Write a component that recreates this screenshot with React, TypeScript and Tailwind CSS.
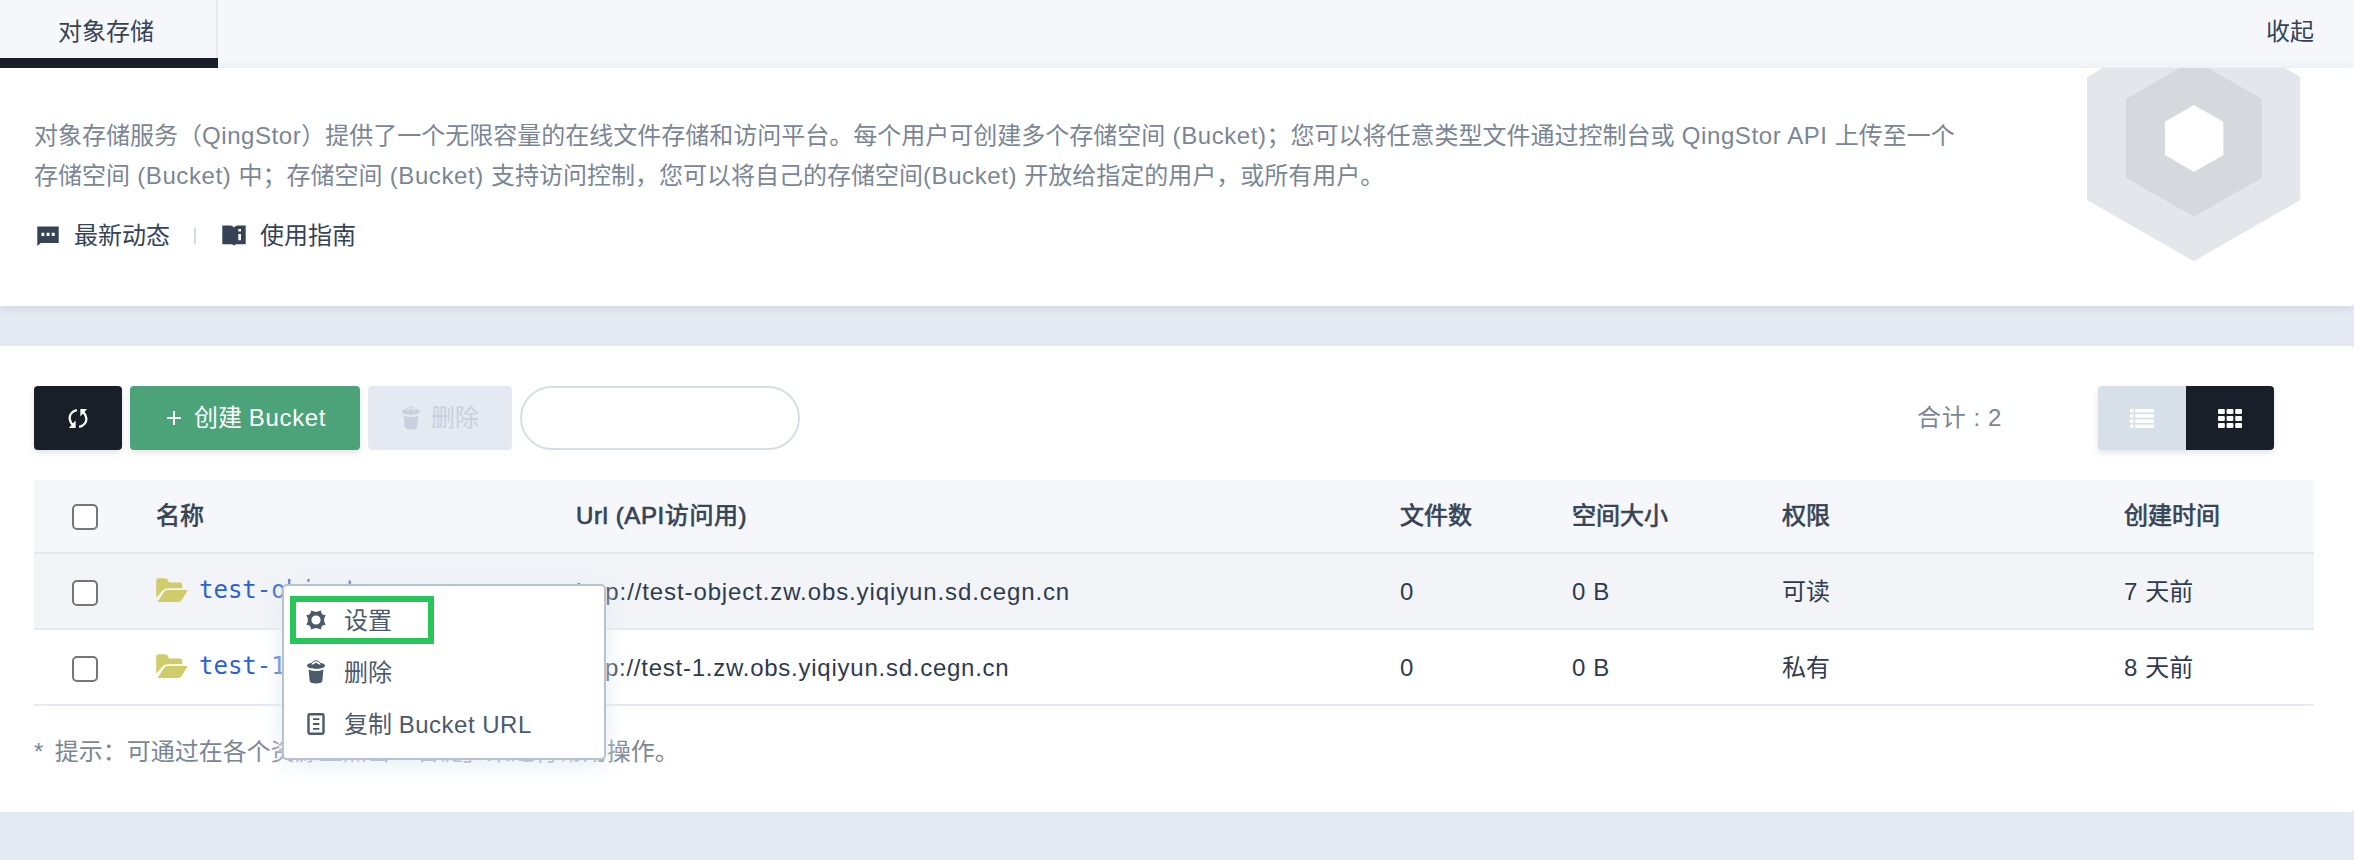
import type { ReactNode } from "react";

const SANS = "font-['Liberation_Sans','Noto_Sans_CJK_SC',sans-serif]";

function ChatIcon() {
  return (
    <svg className="h-5 w-[22px]" viewBox="0 0 22 20" fill="currentColor">
      <path fillRule="evenodd" d="M0.3 0.4H21.7V17H3.8L0.3 20ZM4.4 6.8V10H7.3V6.8ZM9.6 6.8V10H12.5V6.8ZM14.8 6.8V10H17.7V6.8Z" />
    </svg>
  );
}

function GuideIcon() {
  return (
    <svg className="h-[21px] w-6" viewBox="0 0 24 21" fill="currentColor">
      <path d="M0.3 0.5H8.3Q10.6 0.7 12 2.6Q13.4 0.7 15.7 0.5H23.7V19.2H14Q13 19.4 12 20.8Q11 19.4 10 19.2H0.3Z" />
      <path d="M16.3 4.1H19V6.5H16.3ZM16.3 8.9H19V15.2H16.3Z" fill="#fff" />
    </svg>
  );
}

function RefreshIcon() {
  return (
    <svg className="h-[19px] w-5" viewBox="0 0 20 19" fill="none" stroke="currentColor" strokeWidth="2.3">
      <path d="M8.9 1.1C3.9 2.1 1.2 5.9 1.7 9.9C2 12.1 3.2 14.6 5.2 16.4" />
      <path d="M7.6 11.4V19H0.9Z" fill="currentColor" stroke="none" />
      <path d="M11.1 17.9C16.1 16.9 18.8 13.1 18.3 9.1C18 6.9 16.8 4.4 14.8 2.6" />
      <path d="M12.4 7.6V0H19.1Z" fill="currentColor" stroke="none" />
    </svg>
  );
}

function TrashIcon() {
  return (
    <svg className="h-6 w-[18px]" viewBox="0 0 18 24" fill="currentColor">
      <path d="M4.3 4C5.2 1.9 7 .9 9 .9S12.8 1.9 13.7 4" fill="none" stroke="currentColor" strokeWidth="1" />
      <path d="M0 5.6C0 4.2 2 3.2 4.3 2.9L4.7 4.7L6.3 4.2L9 2.7L11.7 4.2L13.3 4.7L13.7 2.9C16 3.2 18 4.2 18 5.6C18 7.6 14 9 9 9S0 7.6 0 5.6Z" />
      <path d="M1.6 9.5Q5 11 9 11T16.4 9.5L15.3 21Q15.1 22.2 13.8 22.7Q9 24.2 4.2 22.7Q2.9 22.2 2.7 21Z" />
    </svg>
  );
}

function GearIcon() {
  return (
    <svg className="size-5" viewBox="0 0 20 20" fill="currentColor">
      <path
        fillRule="evenodd"
        d="M5.2.4L8.1 1.6Q10 2.3 11.9 1.6L14.8.4L15.6 3.3Q16 4 16.7 4.4L19.6 5.2L18.4 8.1Q17.7 10 18.4 11.9L19.6 14.8L16.7 15.6Q16 16 15.6 16.7L14.8 19.6L11.9 18.4Q10 17.7 8.1 18.4L5.2 19.6L4.4 16.7Q4 16 3.3 15.6L.4 14.8L1.6 11.9Q2.3 10 1.6 8.1L.4 5.2L3.3 4.4Q4 4 4.4 3.3ZM10 5.4A4.6 4.6 0 1 0 10 14.6A4.6 4.6 0 1 0 10 5.4Z"
      />
    </svg>
  );
}

function DocIcon() {
  return (
    <svg className="h-[22px] w-[18px]" viewBox="0 0 18 22" fill="none" stroke="currentColor">
      <rect x="1.5" y="1.2" width="15" height="19.6" rx="1.2" strokeWidth="2.4" />
      <path d="M6 6.2H12.4M6 11H12.4M6 15.8H12.4" strokeWidth="1.8" />
    </svg>
  );
}

function FolderIcon() {
  return (
    <svg className="h-6 w-8" viewBox="0 0 32 24" fill="#d1cc6b">
      <path d="M0.2 19.8V2.4Q0.2 0.2 2.4 0.2H9.4Q11 0.2 11.8 1.7L13 4.4H24Q26.3 4.4 26.3 6.6V10.2H12.4Q8 10.2 5.9 13.2Z" />
      <path d="M1.5 24L7.9 14.1Q9.1 12.1 11.5 12.1H30.9Q31.9 12.1 31.3 13.1L25.5 22.2Q24.3 24 22.1 24Z" />
    </svg>
  );
}

function ListIcon() {
  return (
    <svg className="h-[19px] w-6" viewBox="0 0 24 19" fill="currentColor">
      {[0, 5.2, 10.4, 15.6].map((y) => (
        <g key={y}>
          <rect x="0" y={y} width="3.4" height="3.4" />
          <rect x="5.2" y={y} width="18.8" height="3.4" />
        </g>
      ))}
    </svg>
  );
}

function GridIcon() {
  return (
    <svg className="h-[19px] w-6" viewBox="0 0 24 19" fill="currentColor">
      {[0, 7, 14].map((y) =>
        [0, 8.6, 17.2].map((x) => <rect key={`${x}-${y}`} x={x} y={y} width="6.8" height="5" rx="1" />)
      )}
    </svg>
  );
}

function HexMark() {
  return (
    <svg className="h-[193px] w-[214px]" viewBox="2087 68 214 193">
      <path d="M2193.7 15.5L2300.3 77V200L2193.7 261.2L2087 200V77Z" fill="#e3e6eb" />
      <path d="M2194 59.8L2262 99V177.7L2194 216.8L2126 177.7V99Z" fill="#d5d8dd" />
      <path d="M2194 105L2223.4 121.8V155L2194 172L2165 155V121.8Z" fill="#fff" />
    </svg>
  );
}

function Latin({ children }: { children: ReactNode }) {
  return <span className="tracking-[0.58px]">{children}</span>;
}

function Checkbox() {
  return (
    <span className="flex w-[122px] shrink-0 pl-[38px] pt-[2px]">
      <span className="size-[26px] rounded-[5px] border-2 border-[#767676] bg-white" />
    </span>
  );
}

interface Bucket {
  name: string;
  url: string;
  urlTracking: string;
  access: string;
  created: string;
}

const buckets: Bucket[] = [
  {
    name: "test-object",
    url: "http://test-object.zw.obs.yiqiyun.sd.cegn.cn",
    urlTracking: "tracking-[0.89px]",
    access: "可读",
    created: "7 天前",
  },
  {
    name: "test-1",
    url: "http://test-1.zw.obs.yiqiyun.sd.cegn.cn",
    urlTracking: "tracking-[0.75px]",
    access: "私有",
    created: "8 天前",
  },
];

function Columns({ cells }: { cells: ReactNode[] }) {
  return (
    <>
      <Checkbox />
      <div className="w-[420px] shrink-0">{cells[0]}</div>
      <div className="w-[824px] shrink-0">{cells[1]}</div>
      <div className="w-[172px] shrink-0">{cells[2]}</div>
      <div className="w-[210px] shrink-0">{cells[3]}</div>
      <div className="w-[342px] shrink-0">{cells[4]}</div>
      <div>{cells[5]}</div>
    </>
  );
}

function MenuItem({ icon, children }: { icon: ReactNode; children: ReactNode }) {
  return (
    <div className="flex h-[52px] items-center">
      <span className="flex w-[60px] justify-center pl-[3px]">{icon}</span>
      <span className="pt-px">{children}</span>
    </div>
  );
}

function ContextMenu() {
  return (
    <div className="absolute left-[282px] top-[584px] flex h-[176px] w-[324px] flex-col rounded-[5px] border-2 border-[#b6c2cf] bg-white py-2 text-[#4c5a6c] shadow-[0_4px_26px_#e6edf2]">
      <MenuItem icon={<GearIcon />}>设置</MenuItem>
      <MenuItem icon={<TrashIcon />}>删除</MenuItem>
      <MenuItem icon={<DocIcon />}>
        复制 <span className="tracking-[0.5px]">Bucket URL</span>
      </MenuItem>
      <div className="absolute left-[6px] top-[10px] h-12 w-36 border-[6px] border-[#28c558]" />
    </div>
  );
}

export default function App() {
  return (
    <div className={`relative flex h-[860px] w-[2354px] flex-col overflow-hidden whitespace-nowrap bg-[#e5e9f2] text-[24px] leading-[40px] text-[#364355] ${SANS}`}>
      <header className="flex h-[68px] shrink-0 justify-between bg-[#f5f7fa]">
        <div className="flex w-[218px] flex-col">
          <div className="flex h-[58px] items-center border-r-2 border-[#e5e9f0] pl-[58px] pt-[6px]">对象存储</div>
          <div className="h-[10px] bg-[#181f29]" />
        </div>
        <div className="flex h-[58px] items-center pr-10 pt-[6px]">收起</div>
      </header>

      <section className="flex h-[238px] shrink-0 justify-between rounded-br-[4px] bg-white pl-[34px] pr-[53px] shadow-[0_2px_8px_rgba(60,80,100,0.13)]">
        <div className="flex flex-col pt-12">
          <p className="text-[#7b8694]">
            对象存储服务（<Latin>QingStor</Latin>）提供了一个无限容量的在线文件存储和访问平台。每个用户可创建多个存储空间<Latin> (Bucket)</Latin>；您可以将任意类型文件通过控制台或<Latin> QingStor API </Latin>上传至一个
            <br />
            存储空间<Latin> (Bucket) </Latin>中；存储空间<Latin> (Bucket) </Latin>支持访问控制，您可以将自己的存储空间<Latin>(Bucket) </Latin>开放给指定的用户，或所有用户。
          </p>
          <div className="mt-[19px] flex items-center pl-[3px]">
            <ChatIcon />
            <span className="ml-[15px] pt-px">最新动态</span>
            <span className="ml-6 h-4 w-[2px] bg-[#d3dce8]" />
            <span className="ml-[26px]"><GuideIcon /></span>
            <span className="ml-[14px] pt-px">使用指南</span>
          </div>
        </div>
        <HexMark />
      </section>

      <main className="mt-10 flex h-[466px] shrink-0 flex-col rounded-r-[4px] bg-white px-[34px] pr-10 pt-10">
        <div className="flex h-16 items-center">
          <button className="flex h-16 w-[88px] items-center justify-center rounded-[4px] bg-[#181f29] text-white shadow-[0_3px_6px_rgba(35,45,65,0.12)]">
            <RefreshIcon />
          </button>
          <button className="ml-2 flex h-16 w-[230px] items-center rounded-[4px] bg-[#4ca379] pl-[37px] text-white shadow-[0_3px_6px_rgba(35,45,65,0.12)]">
            <svg className="mr-[13px] size-[14px]" viewBox="0 0 14 14" stroke="currentColor" strokeWidth="2"><path d="M0 7H14M7 0V14" /></svg>
            创建&nbsp;<span className="tracking-[0.7px]">Bucket</span>
          </button>
          <button className="ml-2 flex h-16 w-36 items-center gap-[11px] rounded-[4px] bg-[#e5e9f2] pl-[34px] text-[#c8d0dd]">
            <TrashIcon />
            删除
          </button>
          <div className="ml-2 h-16 w-[280px] rounded-full border-2 border-[#d8dee7]" />
          <div className="ml-auto mr-24 tracking-[0.6px] text-[#7b8694]">合计 : 2</div>
          <div className="mr-10 flex h-16 w-[176px] overflow-hidden rounded-[4px] text-white shadow-[0_3px_6px_rgba(35,45,65,0.12)]">
            <div className="flex w-[88px] items-center justify-center bg-[#d7dfe8]"><ListIcon /></div>
            <div className="flex w-[88px] items-center justify-center bg-[#181f29]"><GridIcon /></div>
          </div>
        </div>

        <div className="mt-[30px] flex flex-col">
          <div className="flex h-[74px] items-center border-b-2 border-[#e3e9ef] bg-[#f5f7fa] [-webkit-text-stroke:0.7px_#364355]">
            <Columns
              cells={["名称", <span key="u" className="tracking-[0.6px]">Url (API访问用)</span>, "文件数", "空间大小", "权限", "创建时间"]}
            />
          </div>
          {buckets.map((b, i) => (
            <div
              key={b.name}
              className={`flex h-[76px] items-center border-b-2 border-[#e5e9f0] pt-[2px] text-[#2f3b4c] ${i === 0 ? "bg-[#f2f4f8]" : ""}`}
            >
              <Columns
                cells={[
                  <span key="n" className="flex items-center gap-[11px] pb-[5px]">
                    <FolderIcon />
                    <span className="font-['DejaVu_Sans_Mono',monospace] text-[#2b62d1]">{b.name}</span>
                  </span>,
                  <span key="u" className={b.urlTracking}>{b.url}</span>,
                  "0",
                  <Latin key="s">0 B</Latin>,
                  b.access,
                  <span key="c"><Latin>{b.created.slice(0, 2)}</Latin>{b.created.slice(2)}</span>,
                ]}
              />
            </div>
          ))}
        </div>
        <p className="mt-[26px] text-[#7b8694]">
          <span className="tracking-[2.4px]">* </span>提示：可通过在各个资源上点击「右键」来进行常用操作。
        </p>
      </main>

      <ContextMenu />
    </div>
  );
}
